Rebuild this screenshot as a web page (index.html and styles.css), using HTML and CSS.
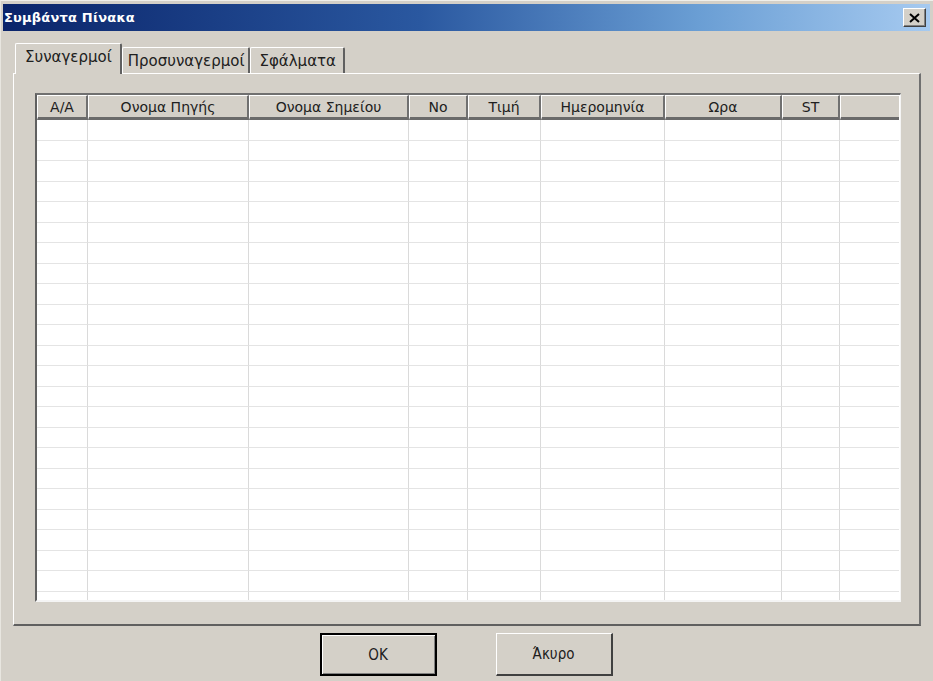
FILE: index.html
```html
<!DOCTYPE html>
<html lang="el">
<head>
<meta charset="utf-8">
<title>Συμβάντα Πίνακα</title>
<link rel="stylesheet" href="styles.css">
</head>
<body>
<div class="window">
  <div class="titlebar">
    <span class="title">Συμβάντα Πίνακα</span>
    <span class="close">
      <svg width="11" height="10" viewBox="0 0 11 10"><path d="M1 1 L10 9 M10 1 L1 9" stroke="#000" stroke-width="2" fill="none"/></svg>
    </span>
  </div>
  <div class="tabs">
    <div class="tab active">Συναγερμοί</div>
    <div class="tab">Προσυναγερμοί</div>
    <div class="tab">Σφάλματα</div>
  </div>
  <div class="panel">
    <div class="listview">
      <table class="grid">
        <colgroup>
          <col class="c1"><col class="c2"><col class="c3"><col class="c4"><col class="c5"><col class="c6"><col class="c7"><col class="c8"><col class="c9">
        </colgroup>
        <thead>
          <tr><th>A/A</th><th>Ονομα Πηγής</th><th>Ονομα Σημείου</th><th>No</th><th>Τιμή</th><th>Ημερομηνία</th><th>Ωρα</th><th>ST</th><th></th></tr>
        </thead>
        <tbody>
          <tr><td></td><td></td><td></td><td></td><td></td><td></td><td></td><td></td><td></td></tr>
          <tr><td></td><td></td><td></td><td></td><td></td><td></td><td></td><td></td><td></td></tr>
          <tr><td></td><td></td><td></td><td></td><td></td><td></td><td></td><td></td><td></td></tr>
          <tr><td></td><td></td><td></td><td></td><td></td><td></td><td></td><td></td><td></td></tr>
          <tr><td></td><td></td><td></td><td></td><td></td><td></td><td></td><td></td><td></td></tr>
          <tr><td></td><td></td><td></td><td></td><td></td><td></td><td></td><td></td><td></td></tr>
          <tr><td></td><td></td><td></td><td></td><td></td><td></td><td></td><td></td><td></td></tr>
          <tr><td></td><td></td><td></td><td></td><td></td><td></td><td></td><td></td><td></td></tr>
          <tr><td></td><td></td><td></td><td></td><td></td><td></td><td></td><td></td><td></td></tr>
          <tr><td></td><td></td><td></td><td></td><td></td><td></td><td></td><td></td><td></td></tr>
          <tr><td></td><td></td><td></td><td></td><td></td><td></td><td></td><td></td><td></td></tr>
          <tr><td></td><td></td><td></td><td></td><td></td><td></td><td></td><td></td><td></td></tr>
          <tr><td></td><td></td><td></td><td></td><td></td><td></td><td></td><td></td><td></td></tr>
          <tr><td></td><td></td><td></td><td></td><td></td><td></td><td></td><td></td><td></td></tr>
          <tr><td></td><td></td><td></td><td></td><td></td><td></td><td></td><td></td><td></td></tr>
          <tr><td></td><td></td><td></td><td></td><td></td><td></td><td></td><td></td><td></td></tr>
          <tr><td></td><td></td><td></td><td></td><td></td><td></td><td></td><td></td><td></td></tr>
          <tr><td></td><td></td><td></td><td></td><td></td><td></td><td></td><td></td><td></td></tr>
          <tr><td></td><td></td><td></td><td></td><td></td><td></td><td></td><td></td><td></td></tr>
          <tr><td></td><td></td><td></td><td></td><td></td><td></td><td></td><td></td><td></td></tr>
          <tr><td></td><td></td><td></td><td></td><td></td><td></td><td></td><td></td><td></td></tr>
          <tr><td></td><td></td><td></td><td></td><td></td><td></td><td></td><td></td><td></td></tr>
          <tr><td></td><td></td><td></td><td></td><td></td><td></td><td></td><td></td><td></td></tr>
          <tr><td></td><td></td><td></td><td></td><td></td><td></td><td></td><td></td><td></td></tr>
        </tbody>
      </table>
    </div>
  </div>
  <div class="buttons">
    <button class="btn default">OK</button>
    <button class="btn">Άκυρο</button>
  </div>
</div>
</body>
</html>
```

FILE: styles.css
```css
html, body {
  margin: 0;
  padding: 0;
}
body {
  width: 933px;
  height: 681px;
  overflow: hidden;
  background: #d4d0c8;
  font-family: "DejaVu Sans", "Liberation Sans", sans-serif;
  font-size: 14px;
  color: #000;
}
.window {
  box-sizing: border-box;
  width: 933px;
  height: 681px;
  padding: 3px 3px 0 2px;
  border-left: 1px solid #e8e6e0;
  border-top: 1px solid #f0efea;
  display: flex;
  flex-direction: column;
}
.titlebar {
  height: 27px;
  background: linear-gradient(to right, #0a246a 0%, #2a58a0 45%, #6a9ed4 75%, #a6caf0 100%);
  display: flex;
  align-items: center;
  justify-content: space-between;
  padding: 0 4px 0 1px;
}
.title {
  color: #fff;
  font-weight: bold;
  font-size: 13px;
  letter-spacing: 0.2px;
}
.close {
  box-sizing: border-box;
  width: 23px;
  height: 19px;
  background: #d4d0c8;
  border-top: 1px solid #fff;
  border-left: 1px solid #fff;
  border-right: 1px solid #404040;
  border-bottom: 1px solid #404040;
  box-shadow: inset -1px -1px 0 #808080;
  display: flex;
  align-items: center;
  justify-content: center;
}
.tabs {
  display: flex;
  align-items: flex-end;
  margin-top: 12px;
  padding-left: 12px;
  height: 31px;
  position: relative;
  z-index: 1;
  margin-bottom: -1px;
}
.tab {
  box-sizing: border-box;
  height: 26px;
  padding: 0 4px 0 5px;
  display: flex;
  align-items: center;
  font-size: 15px;
  color: #202020;
  border-top: 1px solid #fff;
  border-left: 1px solid #fff;
  border-right: 2px solid #606060;
  border-radius: 2px 2px 0 0;
  background: #d4d0c8;
  margin-bottom: 1px;
}
.tab:nth-child(3) {
  padding: 0 7px 0 8px;
}
.tab.active {
  height: 31px;
  padding: 0 8px 4px 9px;
  margin-bottom: 0;
}
.panel {
  box-sizing: border-box;
  margin: 0 9px 0 10px;
  height: 553px;
  border-top: 1px solid #fff;
  border-left: 1px solid #fff;
  border-right: 2px solid #707070;
  border-bottom: 2px solid #606060;
  padding: 19px 18px 0 21px;
}
.listview {
  box-sizing: border-box;
  height: 509px;
  border-top: 2px solid #707070;
  border-left: 2px solid #606060;
  border-right: 1px solid #f4f4f4;
  border-bottom: 2px solid #f4f4f4;
  background: #fff;
  overflow: hidden;
}
.grid {
  border-collapse: separate;
  border-spacing: 0;
  table-layout: fixed;
  width: 862px;
}
.c1 { width: 51px; }
.c2 { width: 161px; }
.c3 { width: 160px; }
.c4 { width: 59px; }
.c5 { width: 73px; }
.c6 { width: 124px; }
.c7 { width: 117px; }
.c8 { width: 58px; }
.c9 { width: 59px; }
.grid th {
  box-sizing: border-box;
  height: 25px;
  padding: 0;
  font-weight: normal;
  font-size: 14px;
  color: #202020;
  background: #d4d0c8;
  border-top: 1px solid #fff;
  border-left: 1px solid #fff;
  border-right: 2px solid #707070;
  border-bottom: 3px solid #6a6a6a;
  text-align: center;
  white-space: nowrap;
}
.grid th:last-child {
  border-right: 0;
}
.grid td {
  box-sizing: border-box;
  height: 20.5px;
  padding: 0;
  border-bottom: 1px solid #e4e4e4;
  border-right: 1px solid #dadada;
}
.grid td:last-child {
  border-right: 0;
}
.buttons {
  display: flex;
  justify-content: center;
  gap: 59px;
  margin-top: 7px;
  padding-right: 1px;
}
.btn {
  box-sizing: border-box;
  width: 117px;
  height: 43px;
  font-family: "DejaVu Sans Condensed", "DejaVu Sans", sans-serif;
  font-size: 15px;
  color: #202020;
  background: #d4d0c8;
  border-top: 1px solid #fff;
  border-left: 1px solid #fff;
  border-right: 2px solid #404040;
  border-bottom: 2px solid #404040;
  padding: 0;
}
.btn.default {
  border: 2px solid #000;
  box-shadow: inset 1px 1px 0 #fff, inset -1px -1px 0 #808080;
}
```
